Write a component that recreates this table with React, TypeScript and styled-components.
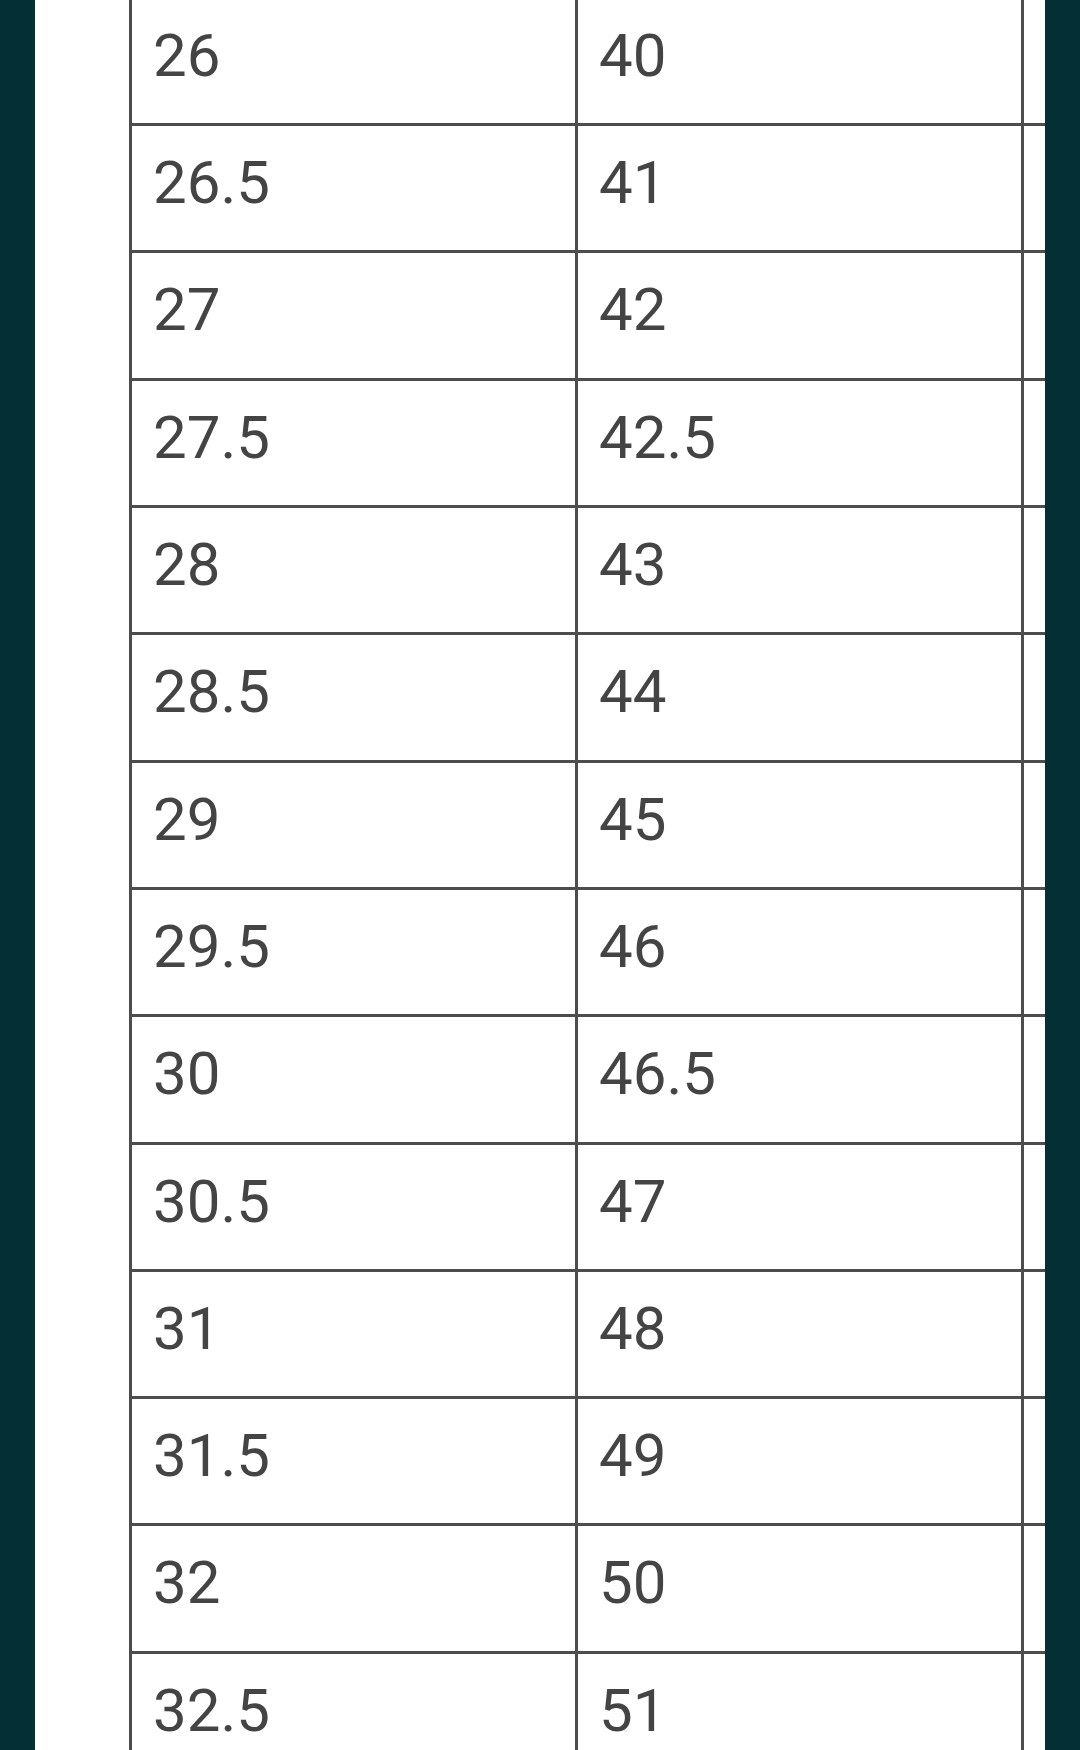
import React from 'react';
import styled, { createGlobalStyle } from 'styled-components';

const GlobalStyle = createGlobalStyle`
  html, body {
    margin: 0;
    padding: 0;
    background: #032f35;
  }
  body {
    font-family: Roboto, "Liberation Sans", sans-serif;
  }
`;

const Frame = styled.div`
  height: 1750px;
  display: flex;
  padding: 0 35px;
  box-sizing: border-box;
  overflow: hidden;
`;

const Sheet = styled.section`
  flex: 1;
  background: #ffffff;
  padding-left: 94px;
  overflow: hidden;
`;

const Grid = styled.div`
  display: grid;
  grid-template-columns: repeat(3, 446px);
  grid-auto-rows: 127.32px;
  margin-top: -4.3px;
`;

const Cell = styled.div`
  box-sizing: border-box;
  border-top: 3px solid #4d4d4d;
  border-left: 3px solid #4d4d4d;
  padding: 21px 0 0 21px;
  font-size: 60px;
  line-height: 72px;
  color: #444444;
  white-space: nowrap;
`;

const rows: [string, string][] = [
  ['26', '40'],
  ['26.5', '41'],
  ['27', '42'],
  ['27.5', '42.5'],
  ['28', '43'],
  ['28.5', '44'],
  ['29', '45'],
  ['29.5', '46'],
  ['30', '46.5'],
  ['30.5', '47'],
  ['31', '48'],
  ['31.5', '49'],
  ['32', '50'],
  ['32.5', '51'],
];

const App = () => {
  return (
    <>
      <GlobalStyle />
      <Frame>
        <Sheet>
          <Grid>
            {rows.map(([cm, eu]) => (
              <React.Fragment key={cm}>
                <Cell>{cm}</Cell>
                <Cell>{eu}</Cell>
                <Cell />
              </React.Fragment>
            ))}
          </Grid>
        </Sheet>
      </Frame>
    </>
  );
};

export default App;
